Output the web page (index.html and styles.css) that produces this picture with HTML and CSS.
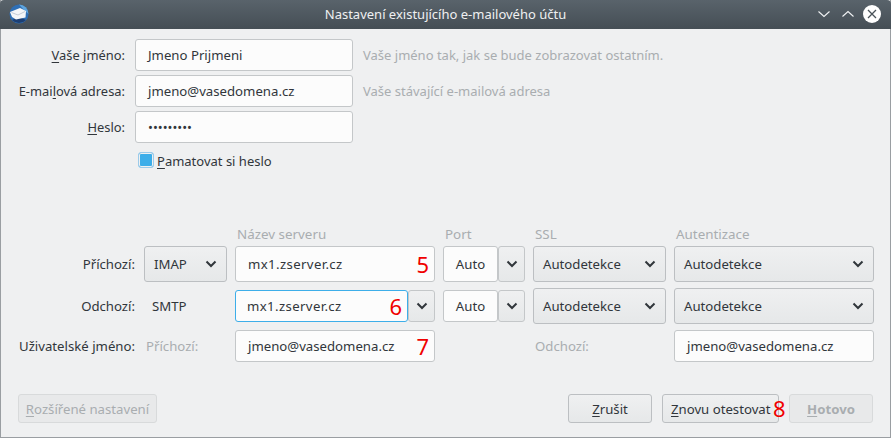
FILE: index.html
```html
<!DOCTYPE html>
<html lang="cs">
<head>
<meta charset="utf-8">
<title>Nastavení existujícího e-mailového účtu</title>
<link rel="stylesheet" href="styles.css">
</head>
<body>
<div class="window">
  <header class="titlebar">
    <svg class="app-icon" width="20" height="20" viewBox="0 0 20 20">
      <circle cx="10" cy="10" r="9.5" fill="#2f6fb5"/>
      <path d="M3 16 A9.5 9.5 0 0 0 17 16 L10 13 Z" fill="#1d3f73"/>
      <path d="M10 .5 A9.500 9.500 0 0 1 19.500 10 L15 6 Z" fill="#5fa5de"/>
      <path d="M1 8 L11 4 L17 7 L16.500 13.500 L7 15.500 L3 13 Z" fill="#f4f6f8"/>
      <path d="M2.500 8.500 L9 11 L16 7.500" fill="none" stroke="#c4ccd6" stroke-width="1"/>
    </svg>
    <div class="title">Nastavení existujícího e-mailového účtu</div>
    <div class="controls">
      <svg width="12" height="14" viewBox="0 0 12 14"><path d="M.5 4.500 L6 9.500 L11.500 4.500" fill="none" stroke="#f2f4f5" stroke-width="1.100"/></svg>
      <svg width="12" height="14" viewBox="0 0 12 14"><path d="M.5 9.500 L6 4.500 L11.500 9.500" fill="none" stroke="#f2f4f5" stroke-width="1.100"/></svg>
      <svg width="18" height="18" viewBox="0 0 18 18"><circle cx="9" cy="9" r="9" fill="#fff"/><path d="M5 5 L13 13 M13 5 L5 13" stroke="#4a5359" stroke-width="1.300"/></svg>
    </div>
  </header>

  <main class="content">
    <section class="identity">
      <label class="label"><u>V</u>aše jméno:</label>
      <div class="field">Jmeno Prijmeni</div>
      <div class="hint">Vaše jméno tak, jak se bude zobrazovat ostatním.</div>
      <label class="label">E-mai<u>l</u>ová adresa:</label>
      <div class="field">jmeno@vasedomena.cz</div>
      <div class="hint">Vaše stávající e-mailová adresa</div>
      <label class="label"><u>H</u>eslo:</label>
      <div class="field dots">•••••••••</div>
      <div></div>
    </section>

    <div class="remember">
      <span class="checkbox"></span>
      <span class="remember-text"><u>P</u>amatovat si heslo</span>
    </div>

    <section class="server">
      <div></div><div></div>
      <div class="head">Název serveru</div>
      <div class="head">Port</div>
      <div class="head">SSL</div>
      <div class="head">Autentizace</div>

      <div class="label">Příchozí:</div>
      <div class="select tall">IMAP<svg class="chev" width="12" height="8" viewBox="0 0 12 8"><path d="M1.500 1.500 L6 6 L10.500 1.500" fill="none" stroke="#31363b" stroke-width="2"/></svg></div>
      <div class="field tall server-name"><span class="host">mx1.zserver.cz</span><span class="num">5</span></div>
      <div class="combo tall">
        <div class="field center">Auto</div>
        <div class="drop"><svg class="chev" width="12" height="8" viewBox="0 0 12 8"><path d="M1.500 1.500 L6 6 L10.500 1.500" fill="none" stroke="#31363b" stroke-width="2"/></svg></div>
      </div>
      <div class="select tall">Autodetekce<svg class="chev" width="12" height="8" viewBox="0 0 12 8"><path d="M1.500 1.500 L6 6 L10.500 1.500" fill="none" stroke="#31363b" stroke-width="2"/></svg></div>
      <div class="select tall">Autodetekce<svg class="chev" width="12" height="8" viewBox="0 0 12 8"><path d="M1.500 1.500 L6 6 L10.500 1.500" fill="none" stroke="#31363b" stroke-width="2"/></svg></div>

      <div class="label">Odchozí:</div>
      <div class="plain">SMTP</div>
      <div class="combo">
        <div class="field focus server-name"><span class="host">mx1.zserver.cz</span><span class="num">6</span></div>
        <div class="drop"><svg class="chev" width="12" height="8" viewBox="0 0 12 8"><path d="M1.500 1.500 L6 6 L10.500 1.500" fill="none" stroke="#31363b" stroke-width="2"/></svg></div>
      </div>
      <div class="combo">
        <div class="field center">Auto</div>
        <div class="drop"><svg class="chev" width="12" height="8" viewBox="0 0 12 8"><path d="M1.500 1.500 L6 6 L10.500 1.500" fill="none" stroke="#31363b" stroke-width="2"/></svg></div>
      </div>
      <div class="select tall">Autodetekce<svg class="chev" width="12" height="8" viewBox="0 0 12 8"><path d="M1.500 1.500 L6 6 L10.500 1.500" fill="none" stroke="#31363b" stroke-width="2"/></svg></div>
      <div class="select tall">Autodetekce<svg class="chev" width="12" height="8" viewBox="0 0 12 8"><path d="M1.500 1.500 L6 6 L10.500 1.500" fill="none" stroke="#31363b" stroke-width="2"/></svg></div>

      <div class="label">Uživatelské jméno:</div>
      <div class="muted">Příchozí:</div>
      <div class="field server-name">jmeno@vasedomena.cz<span class="num">7</span></div>
      <div></div>
      <div class="muted">Odchozí:</div>
      <div class="field">jmeno@vasedomena.cz</div>
    </section>

    <footer class="buttons">
      <div class="btn disabled wide"><span><u>R</u>ozšířené nastavení</span></div>
      <div class="spacer"></div>
      <div class="btn cancel"><span><u>Z</u>rušit</span></div>
      <div class="btn retest"><span><u>Z</u>novu otestovat</span><span class="num eight">8</span></div>
      <div class="btn disabled done"><span><u>H</u>otovo</span></div>
    </footer>
  </main>
</div>
</body>
</html>
```

FILE: styles.css
```css
* { box-sizing: border-box; }
html, body { margin: 0; padding: 0; }
body {
  width: 891px;
  height: 438px;
  overflow: hidden;
  background: #eff0f1;
  font-family: "Noto Sans", sans-serif;
  font-size: 13.2px;
  color: #31363b;
}
u { text-underline-offset: 2px; text-decoration-thickness: 1px; }

.window {
  width: 891px;
  height: 438px;
  display: flex;
  flex-direction: column;
  border-right: 1px solid #9a9ea2;
  border-left: 1px solid #9a9ea2;
  border-bottom: 1px solid #9a9ea2;
  background: #eff0f1;
}
.titlebar {
  flex: 0 0 29px;
  margin: 0 -1px;
  display: flex;
  align-items: center;
  position: relative;
  padding: 0 10px 0 9px;
  background: linear-gradient(#59636b, #454e55);
  border-radius: 4px 4px 0 0;
  color: #eff0f1;
  font-size: 13px;
}
.title {
  position: absolute;
  left: 0;
  right: 0;
  text-align: center;
  line-height: 29px;
}
.controls {
  margin-left: auto;
  display: flex;
  align-items: center;
  gap: 12px;
  position: relative;
  top: -1px;
}
.controls svg:last-child { margin-left: -3px; }
.app-icon { position: relative; top: -1px; }

.content { flex: 1; display: flex; flex-direction: column; padding-top: 10px; }

.identity {
  display: grid;
  grid-template-columns: 124px 218px 1fr;
  grid-auto-rows: 32px;
  column-gap: 10px;
  row-gap: 4px;
  align-items: center;
}
.label { text-align: right; white-space: nowrap; }
.identity .label { font-size: 12.9px; }
.hint { color: #a9adb0; font-size: 13px; }
.field {
  height: 32px;
  display: flex;
  align-items: center;
  padding: 0 12px;
  background: #fcfcfc;
  border: 1px solid #c4c7c9;
  border-radius: 3px;
  white-space: nowrap;
}
.dots { font-size: 13px; }
.host { letter-spacing: .38px; }

.remember {
  display: flex;
  align-items: center;
  gap: 3px;
  margin: 9px 0 0 137px;
  height: 16px;
  font-size: 13px;
}
.remember-text { position: relative; top: 1px; }
.checkbox {
  width: 16px;
  height: 16px;
  border: 1px solid #9ccbea;
  border-radius: 3px;
  background: #3daee9;
  box-shadow: inset 0 0 0 1px #eff0f1;
}

.server {
  margin-top: 52px;
  display: grid;
  grid-template-columns: 135px 83px 200px 82px 133px 200px;
  grid-template-rows: 20px 36px 36px 32px;
  column-gap: 8px;
  row-gap: 6px;
  align-items: center;
}
.server > .label { margin-right: 1px; }
.head { color: #a9adb0; padding-left: 2px; position: relative; top: 4px; font-size: 13.4px; }
.tall { height: 36px; }
.server-name { justify-content: space-between; padding-right: 5px; }
.focus.server-name { padding-left: 11px; }
.num {
  font-size: 22px;
  color: #f00000;
  line-height: 1;
}
.select {
  display: flex;
  align-items: center;
  justify-content: space-between;
  padding: 0 9px;
  border: 1px solid #bcbfc2;
  border-radius: 3px;
  background: linear-gradient(#eff0f1, #e6e8e9);
}
.chev { flex: none; }
.plain { padding-left: 8px; }
.combo { display: flex; height: 32px; }
.combo.tall { height: 36px; }
.combo .field { flex: 1; height: 100%; min-width: 0; }
.center { justify-content: center; padding: 0; }
.focus { border-color: #3daee9; }
.drop {
  flex: 0 0 27px;
  display: flex;
  align-items: center;
  justify-content: center;
  border: 1px solid #c4c7c9;
  border-radius: 3px;
  background: linear-gradient(#eff0f1, #e6e8e9);
}
.muted { color: #a9adb0; padding-left: 2px; }

.buttons {
  margin-top: 32px;
  display: flex;
  height: 29px;
  padding: 0 17px;
  gap: 10px;
}
.spacer { flex: 1; }
.btn {
  position: relative;
  display: flex;
  align-items: center;
  justify-content: center;
  border: 1px solid #bcbfc2;
  border-radius: 3px;
  background: linear-gradient(#eff0f1, #e6e8e9);
  white-space: nowrap;
}
.btn.disabled { color: #a9adb0; background: #e8e9ea; border-color: #d8dadb; }
.wide { width: 139px; }
.cancel { width: 84px; }
.retest { width: 117px; justify-content: flex-start; padding-left: 8px; }
.done { width: 84px; font-weight: 700; }
.eight { position: absolute; left: 110px; top: 2px; }
```
